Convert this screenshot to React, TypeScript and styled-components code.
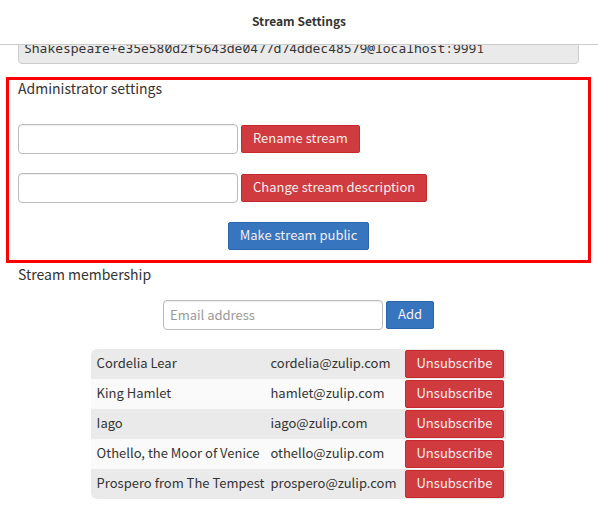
import React from "react";
import styled, { createGlobalStyle } from "styled-components";

const GlobalStyle = createGlobalStyle`
  * {
    box-sizing: border-box;
  }
  body {
    margin: 0;
    background: #fff;
    color: #333;
    font-family: "Noto Sans CJK SC", "Noto Sans", sans-serif;
    font-size: 13px;
    line-height: 20px;
  }
`;

const Header = styled.header`
  height: 45px;
  padding-bottom: 2px;
  border-bottom: 1px solid #ccc;
  display: flex;
  align-items: center;
  justify-content: center;
`;

const Title = styled.h1`
  margin: 0;
  font-size: 12px;
  line-height: 20px;
  font-weight: 700;
`;

const ScrollBody = styled.main`
  overflow: hidden;
  padding-bottom: 14px;
`;

const Address = styled.pre`
  margin: -17px 19px 13px 18px;
  padding: 10px 5px 6px;
  border: 1px solid #ccc;
  border-radius: 4px;
  background: #eaeaea;
  font-family: "Noto Sans Mono", "DejaVu Sans Mono", monospace;
  font-size: 13px;
  line-height: 18px;
`;

const Section = styled.section`
  margin: 0 7px 0 6px;
  padding: 3px 12px 0;
`;

const HighlightedSection = styled(Section)`
  padding: 0 9px;
  border: 3px solid #f00;
`;

const Heading = styled.h2`
  margin: 0 0 28px;
  font-size: 14px;
  line-height: 16px;
  font-weight: 400;
`;

const MemberHeading = styled(Heading)`
  margin-bottom: 18px;
`;

const Form = styled.form<{ $centered?: boolean }>`
  display: flex;
  align-items: center;
  gap: 3px;
  justify-content: ${(p) => (p.$centered ? "center" : "flex-start")};
  margin-bottom: 19px;
`;

const Submit = styled.div`
  display: flex;
  justify-content: center;
  margin-bottom: 10px;
`;

const TextBox = styled.input`
  width: 220px;
  height: 30px;
  padding: 3px 6px 5px;
  border: 1px solid #bbb;
  border-radius: 4px;
  background: #fff;
  box-shadow: inset 0 1px 1px rgba(0, 0, 0, 0.075);
  color: #555;
  font: inherit;

  &::placeholder {
    color: #999;
    opacity: 1;
  }
`;

const Button = styled.button<{ $tone: "danger" | "primary" }>`
  height: 28px;
  padding: 0 11px 2px;
  border: 1px solid ${(p) => (p.$tone === "danger" ? "#c6282c" : "#2865ab")};
  border-radius: 2px;
  background: ${(p) => (p.$tone === "danger" ? "#cf3b3e" : "#3775bf")};
  color: #f5eeee;
  font: inherit;
  white-space: nowrap;
`;

const Members = styled.table`
  margin: 0 auto;
  border-collapse: collapse;
  border-radius: 6px;
  overflow: hidden;

  tr {
    background: #fafafa;
  }
  tr:nth-child(odd) {
    background: #eaeaea;
  }
`;

const Cell = styled.td`
  height: 30px;
  padding: 0 0 2px 6px;
  white-space: nowrap;
`;

const ActionCell = styled(Cell)`
  padding: 0 2px 0 8px;

  button {
    display: block;
  }
`;

const members = [
  ["Cordelia Lear", "cordelia@zulip.com"],
  ["King Hamlet", "hamlet@zulip.com"],
  ["Iago", "iago@zulip.com"],
  ["Othello, the Moor of Venice", "othello@zulip.com"],
  ["Prospero from The Tempest", "prospero@zulip.com"],
];

const stay = (event: React.FormEvent) => event.preventDefault();

export default function App() {
  return (
    <>
      <GlobalStyle />
      <Header>
        <Title>Stream Settings</Title>
      </Header>
      <ScrollBody>
        <Address>Shakespeare+e35e580d2f5643de0477d74ddec48579@localhost:9991</Address>
        <HighlightedSection>
          <Heading>Administrator settings</Heading>
          <Form onSubmit={stay}>
            <TextBox type="text" aria-label="New stream name" />
            <Button $tone="danger">Rename stream</Button>
          </Form>
          <Form onSubmit={stay}>
            <TextBox type="text" aria-label="New stream description" />
            <Button $tone="danger">Change stream description</Button>
          </Form>
          <Submit>
            <Button type="button" $tone="primary">Make stream public</Button>
          </Submit>
        </HighlightedSection>
        <Section>
          <MemberHeading>Stream membership</MemberHeading>
          <Form $centered onSubmit={stay}>
            <TextBox type="email" placeholder="Email address" aria-label="Email address" />
            <Button $tone="primary">Add</Button>
          </Form>
          <Members>
            <tbody>
              {members.map(([name, email]) => (
                <tr key={email}>
                  <Cell>{name}</Cell>
                  <Cell>{email}</Cell>
                  <ActionCell>
                    <Button type="button" $tone="danger">Unsubscribe</Button>
                  </ActionCell>
                </tr>
              ))}
            </tbody>
          </Members>
        </Section>
      </ScrollBody>
    </>
  );
}
